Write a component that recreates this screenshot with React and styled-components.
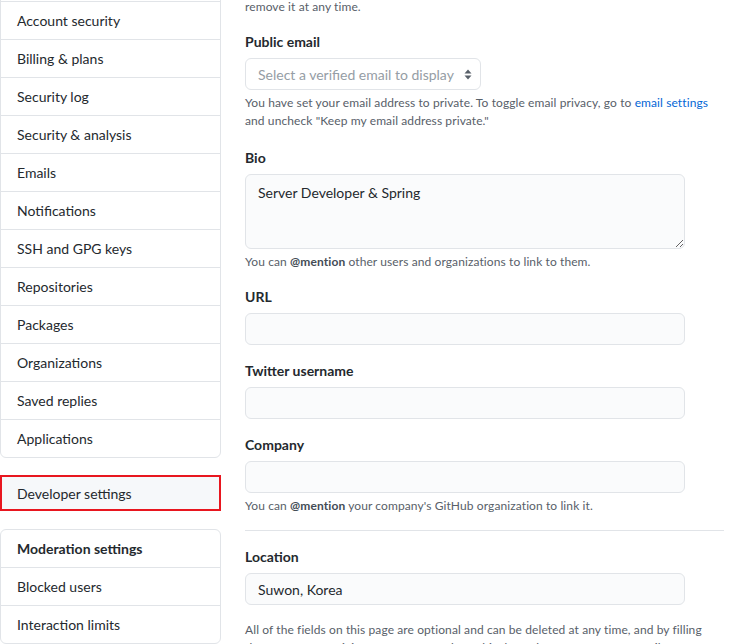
import React from 'react'
import styled, { createGlobalStyle } from 'styled-components'

const GlobalStyle = createGlobalStyle`
  html, body {
    margin: 0;
    padding: 0;
    background: #fff;
    overflow: hidden;
  }
  body {
    font-family: Lato, "Liberation Sans", sans-serif;
    font-size: 14px;
    line-height: 1.5;
    color: #24292e;
  }
`

const Page = styled.div`
  display: flex;
  align-items: flex-start;
  gap: 24px;
  margin-top: -83px;
`

const Sidebar = styled.nav`
  width: 221px;
  flex-shrink: 0;
  margin-top: 8px;
`

const MenuBox = styled.div`
  border: 1px solid #e1e4e8;
  border-radius: 6px;
  background: #fff;
  overflow: hidden;
  margin-top: ${(p) => p.$gap || 0}px;
`

const MenuItem = styled.div`
  padding: 8px 16px;
  line-height: 21px;
  font-size: 14px;
  font-weight: ${(p) => (p.$heading ? 700 : 400)};
  color: #24292e;
  & + & {
    border-top: 1px solid #e1e4e8;
  }
`

const DevBox = styled.div`
  margin-top: 17px;
  border: 2px solid #e8161f;
  background: #f6f8fa;
  padding: 6px 15px 5px;
  line-height: 21px;
  font-size: 14px;
`

const Main = styled.main`
  width: 479px;
  flex-shrink: 0;
`

const Group = styled.div`
  margin-bottom: ${(p) => (p.$mb != null ? p.$mb : 15)}px;
`

const Label = styled.label`
  display: block;
  font-size: 14px;
  font-weight: 700;
  line-height: 21px;
  margin-bottom: 6px;
`

const TextInput = styled.input`
  display: block;
  box-sizing: border-box;
  width: 440px;
  height: 32px;
  padding: 5px 12px;
  font: inherit;
  font-size: 14px;
  line-height: 20px;
  color: #24292e;
  background: #fafbfc;
  border: 1px solid #e1e4e8;
  border-radius: 6px;
  outline: none;
`

const TextArea = styled.textarea`
  display: block;
  box-sizing: border-box;
  width: 440px;
  height: 75px;
  padding: 8px 12px;
  font: inherit;
  font-size: 14px;
  line-height: 20px;
  color: #24292e;
  background: #fafbfc;
  border: 1px solid #e1e4e8;
  border-radius: 6px;
  outline: none;
  resize: vertical;
`

const Select = styled.div`
  box-sizing: border-box;
  width: 236px;
  height: 32px;
  padding: 0 8px 0 12px;
  display: flex;
  align-items: center;
  justify-content: space-between;
  border: 1px solid #e1e4e8;
  border-radius: 6px;
  background: #fff;
  color: #959da5;
  font-size: 14px;
`

const Note = styled.p`
  margin: 4px 0 0;
  font-size: 12px;
  line-height: 18px;
  letter-spacing: 0.1px;
  color: #586069;
  b {
    font-weight: 700;
    color: #444d56;
  }
`

const FootNote = styled(Note)`
  margin-top: 16px;
`

const Link = styled.a`
  color: #0366d6;
  text-decoration: none;
`

const Divider = styled.hr`
  margin: 15px 0;
  border: 0;
  border-top: 1px solid #e1e4e8;
  height: 0;
`

const SelectArrows = () => (
  <svg width="8" height="11" viewBox="0 0 8 11">
    <path d="M4 0.5 L7.5 4.5 H0.5 Z M4 10.5 L0.5 6.5 H7.5 Z" fill="#586069" />
  </svg>
)

const menu = [
  'Profile',
  'Account',
  'Account security',
  'Billing & plans',
  'Security log',
  'Security & analysis',
  'Emails',
  'Notifications',
  'SSH and GPG keys',
  'Repositories',
  'Packages',
  'Organizations',
  'Saved replies',
  'Applications',
]

export default function App() {
  return (
    <>
      <GlobalStyle />
      <Page>
        <Sidebar>
          <MenuBox>
            {menu.map((m) => (
              <MenuItem key={m}>{m}</MenuItem>
            ))}
          </MenuBox>
          <DevBox>Developer settings</DevBox>
          <MenuBox $gap={18}>
            <MenuItem $heading>Moderation settings</MenuItem>
            <MenuItem>Blocked users</MenuItem>
            <MenuItem>Interaction limits</MenuItem>
          </MenuBox>
        </Sidebar>

        <Main>
          <Group>
            <Label>Name</Label>
            <TextInput readOnly defaultValue="" />
            <Note>
              Your name may appear around GitHub where you contribute or are mentioned. You can
              remove it at any time.
            </Note>
          </Group>

          <Group $mb={17}>
            <Label>Public email</Label>
            <Select>
              <span>Select a verified email to display</span>
              <SelectArrows />
            </Select>
            <Note>
              You have set your email address to private. To toggle email privacy, go to{' '}
              <Link href="#">email settings</Link> and uncheck "Keep my email address private."
            </Note>
          </Group>

          <Group>
            <Label>Bio</Label>
            <TextArea readOnly defaultValue="Server Developer & Spring" />
            <Note>
              You can <b>@mention</b> other users and organizations to link to them.
            </Note>
          </Group>

          <Group>
            <Label>URL</Label>
            <TextInput readOnly defaultValue="" />
          </Group>

          <Group>
            <Label>Twitter username</Label>
            <TextInput readOnly defaultValue="" />
          </Group>

          <Group $mb={0}>
            <Label>Company</Label>
            <TextInput readOnly defaultValue="" />
            <Note>
              You can <b>@mention</b> your company's GitHub organization to link it.
            </Note>
          </Group>

          <Divider />

          <Group $mb={0}>
            <Label>Location</Label>
            <TextInput readOnly defaultValue="Suwon, Korea" />
          </Group>

          <FootNote>
            All of the fields on this page are optional and can be deleted at any time, and by
            filling them out, you're giving us consent to share this data wherever your user
            profile appears.
          </FootNote>
        </Main>
      </Page>
    </>
  )
}
